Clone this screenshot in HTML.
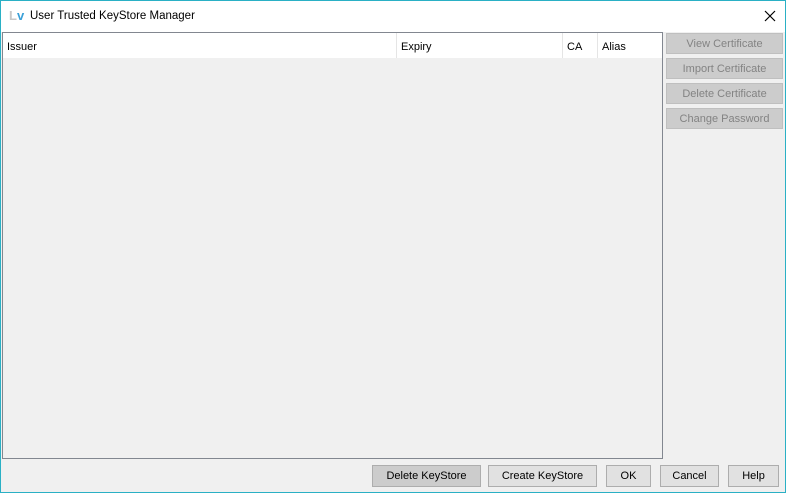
<!DOCTYPE html><html><head><style>
body{margin:0;width:786px;height:493px;overflow:hidden;font-family:"Liberation Sans",sans-serif;font-size:11px;}
.win{position:absolute;left:0;top:0;width:784px;height:491px;border:1px solid #2ab0c5;background:#f0f0f0;}
.title{position:absolute;left:0;top:0;width:784px;height:31px;background:#fff;}
.abs{position:absolute;}
.btn{position:absolute;box-sizing:border-box;border:1px solid #adadad;background:#e1e1e1;text-align:center;color:#000;}
.rb{position:absolute;box-sizing:border-box;border:1px solid #bfbfbf;background:#cccccc;color:#838383;text-align:center;left:665px;width:117px;height:21px;line-height:20px;}
</style></head><body><div class="win">
<div class="title">
<div class="abs" style="left:8px;top:7px;font-size:13px;font-weight:bold;"><span style="color:#c8c8c8">L</span><span style="color:#3aa0d8">v</span></div>
<div class="abs" style="left:29px;top:9px;font-size:11.5px;">User Trusted KeyStore Manager</div>
<svg class="abs" style="left:763px;top:9px" width="12" height="12"><path d="M1 1L11 11M11 1L1 11" stroke="#000" stroke-width="1.2"/></svg>
</div>
<div class="abs" style="left:1px;top:31px;width:659px;height:425px;border:1px solid #828790;background:#f0f0f0;">
<div class="abs" style="left:0;top:0;width:659px;height:25px;background:#fff;border-bottom:1px solid #f0f0f0;">
<div class="abs" style="left:4px;top:8px">Issuer</div>
<div class="abs" style="left:393px;top:0;width:1px;height:25px;background:#e5e5e5"></div>
<div class="abs" style="left:398px;top:8px">Expiry</div>
<div class="abs" style="left:559px;top:0;width:1px;height:25px;background:#e5e5e5"></div>
<div class="abs" style="left:564px;top:8px">CA</div>
<div class="abs" style="left:594px;top:0;width:1px;height:25px;background:#e5e5e5"></div>
<div class="abs" style="left:599px;top:8px">Alias</div>
</div></div>
<div class="rb" style="top:32px">View Certificate</div>
<div class="rb" style="top:57px">Import Certificate</div>
<div class="rb" style="top:82px">Delete Certificate</div>
<div class="rb" style="top:107px">Change Password</div>
<div class="btn" style="left:371px;top:464px;width:109px;height:22px;line-height:21px;background:#cccccc">Delete KeyStore</div>
<div class="btn" style="left:487px;top:464px;width:109px;height:22px;line-height:21px">Create KeyStore</div>
<div class="btn" style="left:605px;top:464px;width:45px;height:22px;line-height:21px">OK</div>
<div class="btn" style="left:659px;top:464px;width:59px;height:22px;line-height:21px">Cancel</div>
<div class="btn" style="left:727px;top:464px;width:51px;height:22px;line-height:21px">Help</div>
</div></body></html>
